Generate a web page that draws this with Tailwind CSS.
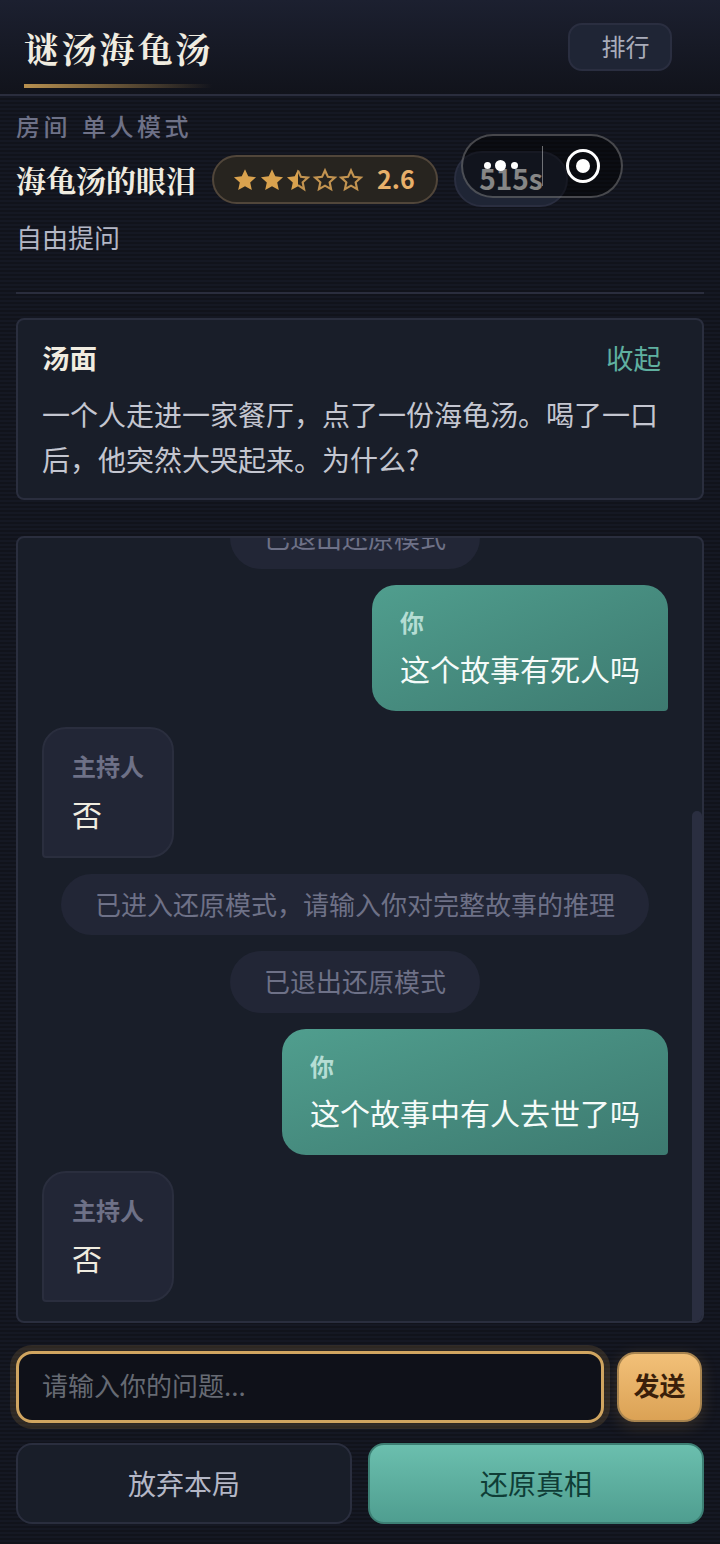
<!DOCTYPE html>
<html lang="zh-CN">
<head>
  <meta charset="UTF-8" />
  <title>谜汤海龟汤</title>
  <script src="https://cdn.jsdelivr.net/npm/@tailwindcss/browser@4"></script>
</head>
<body class="w-[720px] h-[1544px] overflow-hidden bg-[repeating-linear-gradient(0deg,#11131b_0px,#11131b_2px,#151823_2px,#151823_4px)] font-['Noto_Sans_CJK_SC',sans-serif]">
<div class="relative w-[720px] h-[1544px]">

  <!-- Header -->
  <header class="h-[96px] border-b-2 border-[#2a2d3d] bg-gradient-to-b from-[#1c2030] to-[#11131b] flex items-start justify-between pl-6 pr-12">
    <div class="w-[188px] h-[88px] flex flex-col justify-end">
      <h1 class="font-['Noto_Serif_CJK_SC','Noto_Sans_CJK_SC',sans-serif] font-bold text-[35px] leading-[44px] tracking-[2.8px] text-[#f0ece0] whitespace-nowrap">谜汤海龟汤</h1>
      <div class="h-1 mt-[14px] bg-gradient-to-r from-[#b8904f] to-transparent"></div>
    </div>
    <button class="mt-[23px] w-[104px] h-[48px] rounded-[14px] border-2 border-[#2a2e40] bg-[#1f2535] text-[24px] leading-none text-[#a9acba] pl-[11px] pb-[2px]">排行</button>
  </header>

  <main class="px-4">
    <!-- Room info -->
    <div class="flex gap-[11px] mt-[13px] h-[34px] items-center text-[24px] tracking-[3.5px] text-[#6e7187] font-medium">
      <span>房间</span><span>单人模式</span>
    </div>
    <div class="flex items-center mt-[8px] h-[56px]">
      <h2 class="font-['Noto_Serif_CJK_SC','Noto_Sans_CJK_SC',sans-serif] font-bold text-[30px] text-[#f0ece0] whitespace-nowrap">海龟汤的眼泪</h2>
      <div class="ml-4 w-[226px] h-[49px] rounded-full border-2 border-[#51463a] bg-[#27241f] flex items-center pl-[18px]">
        <div class="flex gap-[0.5px] mt-[1px]">
          <svg class="w-[26px] h-[26px]" viewBox="0 0 24 24" fill="#d9a24e"><path d="M12 2l3 6.6 7.2.8-5.4 4.8 1.5 7.1L12 17.7l-6.3 3.6 1.5-7.1L1.800 9.400 9 8.600z"/></svg>
          <svg class="w-[26px] h-[26px]" viewBox="0 0 24 24" fill="#d9a24e"><path d="M12 2l3 6.6 7.2.8-5.4 4.8 1.5 7.1L12 17.7l-6.3 3.6 1.5-7.1L1.800 9.400 9 8.600z"/></svg>
          <svg class="w-[26px] h-[26px]" viewBox="0 0 24 24"><path d="M12 2v15.700l-6.300 3.600 1.500-7.100L1.800 9.400 9 8.600z" fill="#d9a24e"/><path d="M12 3.200l2.700 5.900 6.400.7-4.800 4.300 1.300 6.300L12 16.800" fill="none" stroke="#c29350" stroke-width="2"/></svg>
          <svg class="w-[26px] h-[26px]" viewBox="0 0 24 24" fill="none" stroke="#c29350" stroke-width="2"><path d="M12 3.200l2.700 5.900 6.400.7-4.800 4.300 1.300 6.300L12 17.200l-5.600 3.200 1.300-6.300-4.800-4.300 6.400-.7z"/></svg>
          <svg class="w-[26px] h-[26px]" viewBox="0 0 24 24" fill="none" stroke="#c29350" stroke-width="2"><path d="M12 3.200l2.700 5.900 6.400.7-4.800 4.300 1.300 6.300L12 17.200l-5.600 3.200 1.300-6.300-4.800-4.300 6.400-.7z"/></svg>
        </div>
        <span class="ml-[13px] text-[25px] font-bold text-[#e8b06a] -mt-[1px]">2.6</span>
      </div>
      <div class="ml-4 w-[114px] h-[56px] rounded-full border-2 border-[#2a2e40] bg-[#1f2535] flex items-center justify-center text-[28px] font-bold text-[#f4f4f4] pb-[2px]">515s</div>
    </div>
    <p class="mt-[5px] text-[26px] leading-[50px] text-[#b4b7c6]">自由提问</p>
    <div class="mt-[30px] h-[2px] bg-[#2a2d3d]"></div>

    <!-- Soup card -->
    <section class="mt-[24px] h-[182px] rounded-lg border-2 border-[#2a2e3e] bg-[#191e29] px-[24px] pt-[15px]">
      <div class="flex justify-between pr-[17px] h-[46px] items-center">
        <h3 class="text-[27.500px] font-bold text-[#f0ece0]">汤面</h3>
        <button class="text-[27.500px] text-[#5fb0a0]">收起</button>
      </div>
      <p class="mt-[11px] text-[28px] leading-[45px] text-[#c4c6d0]">一个人走进一家餐厅，点了一份海龟汤。喝了一口后，他突然大哭起来。为什么?</p>
    </section>

    <!-- Chat -->
    <section class="relative mt-[36px] h-[787px] overflow-hidden rounded-lg border-2 border-[#2a2e3e] bg-[#191e29]">
      <div class="-mt-[31px] pl-[24px] pr-[34px] flex flex-col gap-4">
        <div class="self-center h-[62px] px-[34px] pb-[3px] flex items-center rounded-full bg-[#222636] text-[26px] text-[#6e7187]">已退出还原模式</div>
        <div class="self-end rounded-[24px] rounded-br-[4px] bg-gradient-to-br from-[#509e8e] to-[#3d7a70] h-[126px] px-[28px] pt-[19px]">
          <div class="text-[24px] leading-[36px] font-bold text-[#b5ddd4]">你</div>
          <div class="text-[30px] leading-[44px] mt-[6px] text-[#f5fbf9]">这个故事有死人吗</div>
        </div>
        <div class="self-start rounded-[24px] rounded-bl-[4px] border-2 border-[#2a2e3e] bg-[#222636] h-[131px] px-[28px] pt-[19px]">
          <div class="text-[24px] leading-[36px] font-bold text-[#6e7187]">主持人</div>
          <div class="text-[30px] leading-[44px] mt-[7px] text-[#f0ece0]">否</div>
        </div>
        <div class="self-center h-[61px] px-[34px] pb-[2px] flex items-center rounded-full bg-[#222636] text-[26px] text-[#6e7187] whitespace-nowrap">已进入还原模式，请输入你对完整故事的推理</div>
        <div class="self-center h-[62px] px-[34px] pb-[3px] flex items-center rounded-full bg-[#222636] text-[26px] text-[#6e7187]">已退出还原模式</div>
        <div class="self-end rounded-[24px] rounded-br-[4px] bg-gradient-to-br from-[#509e8e] to-[#3d7a70] h-[126px] px-[28px] pt-[19px]">
          <div class="text-[24px] leading-[36px] font-bold text-[#b5ddd4]">你</div>
          <div class="text-[30px] leading-[44px] mt-[6px] text-[#f5fbf9]">这个故事中有人去世了吗</div>
        </div>
        <div class="self-start rounded-[24px] rounded-bl-[4px] border-2 border-[#2a2e3e] bg-[#222636] h-[131px] px-[28px] pt-[19px]">
          <div class="text-[24px] leading-[36px] font-bold text-[#6e7187]">主持人</div>
          <div class="text-[30px] leading-[44px] mt-[7px] text-[#f0ece0]">否</div>
        </div>
      </div>
      <div class="absolute right-0 top-[273px] bottom-0 w-[10px] rounded-t-md bg-[#2a2e40]"></div>
    </section>

    <!-- Input row -->
    <div class="mt-[28px] flex items-center justify-between pr-[2px]">
      <input type="text" placeholder="请输入你的问题..." class="w-[588px] h-[72px] rounded-2xl border-[3px] border-[#d0a560] bg-[#0f1119] shadow-[0_0_0_6px_rgba(217,162,78,0.15)] px-[23px] pb-[5px] text-[26px] text-[#f0ece0] placeholder:text-[#666a73] outline-none" />
      <button class="w-[85px] h-[70px] rounded-[18px] border-2 border-[#a8844f] bg-gradient-to-b from-[#f2c078] to-[#dba255] shadow-[0_4px_16px_rgba(217,162,78,0.2)] pb-[5px] text-[26px] font-bold text-[#3a1f0a]">发送</button>
    </div>

    <!-- Actions -->
    <div class="mt-[20px] flex gap-4">
      <button class="flex-1 h-[81px] rounded-2xl border-2 border-[#2a2e3e] bg-[#191e29] pb-[2px] text-[28px] text-[#b4b7c6]">放弃本局</button>
      <button class="flex-1 h-[81px] rounded-2xl border-2 border-[#3d7f74] bg-gradient-to-b from-[#6bbfae] to-[#4f9e90] pb-[2px] text-[28px] text-[#0f3d36]">还原真相</button>
    </div>
  </main>

  <!-- Mini program capsule, floats over the page -->
  <div class="absolute left-[461px] top-[134px] w-[162px] h-[64px] rounded-full border-2 border-white/25 bg-black/45">
    <div class="absolute left-[79px] top-[10px] w-[1px] h-[40px] bg-white/40"></div>
    <div class="absolute left-[21px] top-[26px] w-[7px] h-[7px] rounded-full bg-white"></div>
    <div class="absolute left-[32px] top-[24px] w-[11px] h-[11px] rounded-full bg-white"></div>
    <div class="absolute left-[48px] top-[26px] w-[7px] h-[7px] rounded-full bg-white"></div>
    <div class="absolute left-[103px] top-[13px] w-[34px] h-[34px] rounded-full border-[3px] border-white flex items-center justify-center">
      <div class="w-[14px] h-[14px] rounded-full bg-white"></div>
    </div>
  </div>
</div>
</body>
</html>
